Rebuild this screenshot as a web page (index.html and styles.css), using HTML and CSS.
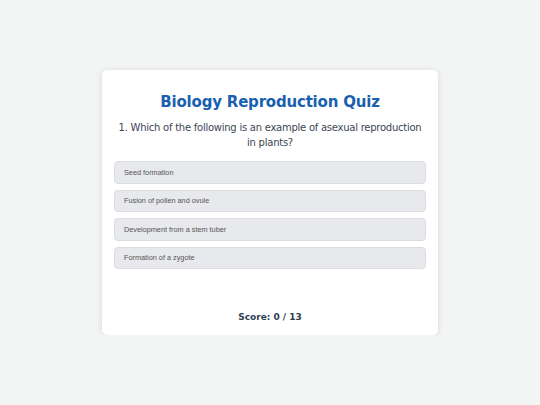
FILE: index.html
```html
<!DOCTYPE html>
<html lang="en">
<head>
    <meta charset="UTF-8">
    <meta name="viewport" content="width=device-width, initial-scale=1.0">
    <title>Biology Reproduction Quiz</title>
    <link rel="stylesheet" href="styles.css">
</head>
<body>
    <div class="quiz-container">
        <h1>Biology Reproduction Quiz</h1>
        <div class="question">1. Which of the following is an example of asexual reproduction in plants?</div>
        <div class="options">
            <button class="option">Seed formation</button>
            <button class="option">Fusion of pollen and ovule</button>
            <button class="option">Development from a stem tuber</button>
            <button class="option">Formation of a zygote</button>
        </div>
        <div class="score">Score: 0 / 13</div>
    </div>
</body>
</html>
```

FILE: styles.css
```css
* {
    margin: 0;
    padding: 0;
    box-sizing: border-box;
}

body {
    font-family: 'DejaVu Sans', Verdana, sans-serif;
    background-color: #f3f4f4;
    padding-top: 70px;
}

.quiz-container {
    background: #fff;
    width: 336px;
    height: 265px;
    margin: 0 auto;
    padding: 23px 12px 13px;
    border-radius: 5px;
    box-shadow: 0 1px 6px rgba(0, 0, 0, 0.12);
    display: flex;
    flex-direction: column;
}

h1 {
    text-align: center;
    color: #1a5fb0;
    font-size: 15px;
    letter-spacing: -0.2px;
    line-height: 18px;
    margin-bottom: 9px;
}

.question {
    text-align: center;
    color: #3c4653;
    font-size: 10px;
    letter-spacing: -0.25px;
    line-height: 15px;
    margin-bottom: 11px;
}

.options {
    display: flex;
    flex-direction: column;
    gap: 6px;
}

.option {
    font-family: 'Liberation Sans', Arial, sans-serif;
    font-size: 7.3px;
    color: #555;
    text-align: left;
    height: 22.5px;
    padding: 0 9px;
    background-color: #e8e9ec;
    border: 1px solid #dcdde1;
    border-radius: 4px;
    cursor: pointer;
}

.score {
    margin-top: auto;
    text-align: center;
    font-size: 9px;
    font-weight: bold;
    color: #2f3e52;
}
```
